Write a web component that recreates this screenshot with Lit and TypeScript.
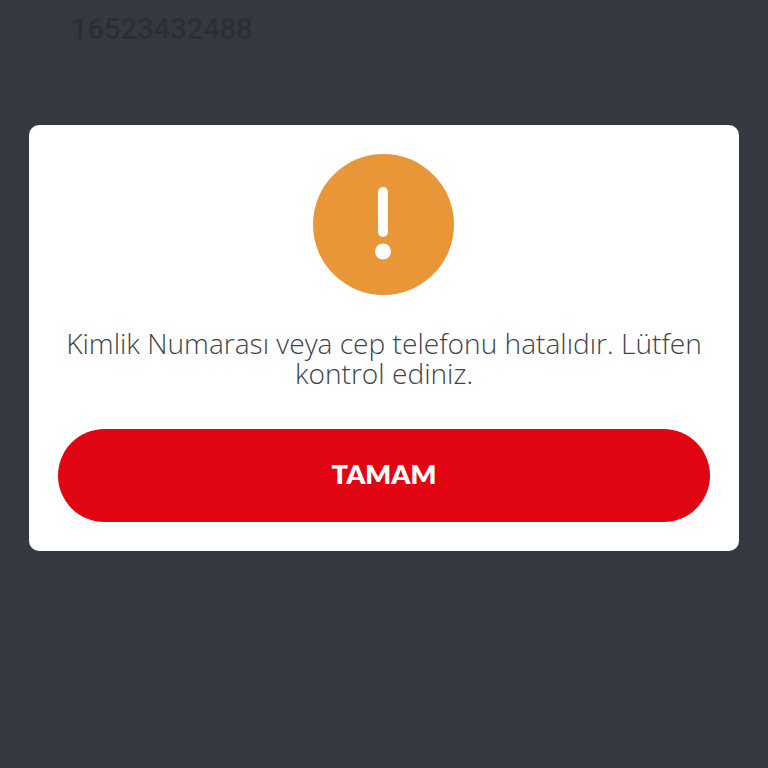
import { LitElement, html, css } from "lit";
import { customElement } from "lit/decorators.js";

@customElement("app-root")
export class AppRoot extends LitElement {
  static styles = css`
    :host { display: block; width: 768px; height: 768px; background: #363941; overflow: hidden; font-family: "Lato", "Open Sans", sans-serif; }
    .number { height: 125px; box-sizing: border-box; padding: 13px 0 0 71px; font-family: "Roboto", sans-serif; font-size: 29px; line-height: 32px; font-weight: 500; letter-spacing: 0.05px; color: #2b2e35; }
    .card { margin: 0 29px; height: 426px; box-sizing: border-box; background: #fff; border-radius: 10px; padding: 29px 29px; display: flex; flex-direction: column; align-items: center; }
    .icon { width: 141px; height: 141px; display: block; flex: none; margin-left: -1px; }
    .msg { margin-top: 34px; height: 60px; width: 100%; text-align: center; font-family: "Open Sans", sans-serif; font-weight: 300; font-size: 28.1px; line-height: 29.5px; color: #3c444a; }
    .btn { margin-top: 40px; width: 100%; height: 93px; border: 0; border-radius: 47px; background: #e10412; color: #fff; font: 800 27px/89px "Lato", sans-serif; padding: 0 0 4px; box-sizing: border-box; }
  `;
  render() {
    return html`
      <div class="number">16523432488</div>
      <div class="card">
        <svg class="icon" viewBox="0 0 141 141">
          <circle cx="70.5" cy="70.5" r="70.5" fill="#e99638"></circle>
          <path d="M70 38v40" stroke="#fff" stroke-width="10" stroke-linecap="round" fill="none"></path>
          <circle cx="70" cy="97.5" r="8" fill="#fff"></circle>
        </svg>
        <div class="msg">Kimlik Numarası veya cep telefonu hatalıdır. Lütfen kontrol ediniz.</div>
        <button class="btn">TAMAM</button>
      </div>
    `;
  }
}
